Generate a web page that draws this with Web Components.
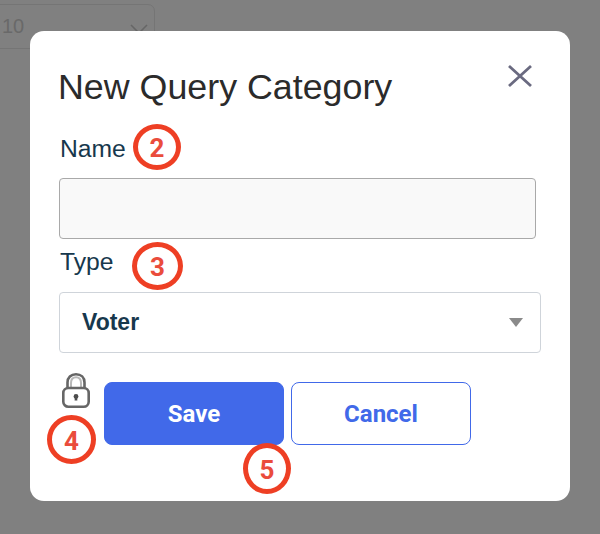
<!DOCTYPE html>
<html>
<head>
<meta charset="utf-8">
<title>New Query Category</title>
<style>
  html, body { margin: 0; height: 534px; overflow: hidden; background: #808080; font-family: "Liberation Sans", Arial, sans-serif; }
</style>
</head>
<body>
<bg-select></bg-select>
<query-modal heading="New Query Category">
  <form-field label="Name" badge="2" bx="74" by="-11" bw="48" bh="46" gap="15"><text-box></text-box></form-field>
  <form-field label="Type" badge="3" bx="73" by="-6" bw="51" bh="48" gap="16"><type-select value="Voter"></type-select></form-field>
  <modal-actions></modal-actions>
</query-modal>

<script>
// page size select that sits behind the dimmed backdrop
class BgSelect extends HTMLElement {
  constructor() {
    super();
    this.attachShadow({ mode: 'open' });
    this.shadowRoot.innerHTML = `
      <style>
        :host { display: block; margin: 4px 0 0 -10px; width: 165px; height: 45px; box-sizing: border-box;
          border: 1px solid #757575; border-radius: 7px; background: #808080; }
        .in { display: flex; align-items: center; justify-content: space-between; height: 100%; padding: 0 6px 0 11px; }
        span { font: 400 20px "Liberation Sans", sans-serif; color: #696969; }
        svg { display: block; margin-top: 5px; }
      </style>
      <div class="in">
        <span>10</span>
        <svg width="18" height="10" viewBox="0 0 18 10"><path d="M1 1l8 8 8-8" fill="none" stroke="#666" stroke-width="1.6"/></svg>
      </div>`;
  }
}

// red numbered ring from the annotated screenshot
class AnnoBadge extends HTMLElement {
  constructor() {
    super();
    this.attachShadow({ mode: 'open' });
  }
  connectedCallback() {
    const w = this.getAttribute('w') || 48;
    const h = this.getAttribute('h') || 48;
    this.shadowRoot.innerHTML = `
      <style>
        :host { display: block; position: absolute; width: ${w}px; height: ${h}px; box-sizing: border-box;
          border: 5px solid #ee3f24; border-radius: 50%; background: #fff; }
        div { display: flex; align-items: center; justify-content: center; height: 100%; box-sizing: border-box; padding-top: 2px;
          font: 700 26px Roboto, "Liberation Sans", sans-serif; color: #ea4c3c; }
      </style>
      <div>${this.getAttribute('n')}</div>`;
  }
}

class QueryModal extends HTMLElement {
  constructor() {
    super();
    this.attachShadow({ mode: 'open' });
  }
  connectedCallback() {
    this.shadowRoot.innerHTML = `
      <style>
        :host { display: block; position: absolute; left: 30px; top: 31px; width: 540px; height: 470px; box-sizing: border-box;
          padding: 36px 29px 0 29px; background: #fff; border-radius: 14px; }
        header { display: flex; justify-content: space-between; align-items: flex-start; height: 40px; margin-bottom: 28px; }
        h1 { margin: 0 0 0 -1px; font: 400 35.8px/40px "Liberation Sans", sans-serif; color: #2b2b2b; }
        svg { display: block; margin: -3px 9px 0 0; }
      </style>
      <header>
        <h1>${this.getAttribute('heading')}</h1>
        <svg width="24" height="24" viewBox="0 0 24 24"><path d="M1 2L23 22M23 2L1 22" fill="none" stroke="#6a6a80" stroke-width="2.8"/></svg>
      </header>
      <slot></slot>`;
  }
}

class FormField extends HTMLElement {
  constructor() {
    super();
    this.attachShadow({ mode: 'open' });
  }
  connectedCallback() {
    const a = (k) => this.getAttribute(k);
    this.shadowRoot.innerHTML = `
      <style>
        :host { display: block; position: relative; }
        .lbl { display: block; height: 28px; margin-left: 1px; font: 400 24.7px/28px "Liberation Sans", sans-serif; color: #17384d; }
        anno-badge { left: ${a('bx')}px; top: ${a('by')}px; }
        .sp { height: ${a('gap')}px; }
      </style>
      <label class="lbl">${a('label')}</label>
      <anno-badge n="${a('badge')}" w="${a('bw')}" h="${a('bh')}"></anno-badge>
      <div class="sp"></div>
      <slot></slot>`;
  }
}

class TextBox extends HTMLElement {
  constructor() {
    super();
    this.attachShadow({ mode: 'open' });
    this.shadowRoot.innerHTML = `
      <style>
        :host { display: block; width: 477px; height: 61px; box-sizing: border-box; margin-bottom: 9px;
          background: #f9f9f9; border: 1px solid #a9a9a9; border-radius: 4px; }
      </style>`;
  }
}

class TypeSelect extends HTMLElement {
  constructor() {
    super();
    this.attachShadow({ mode: 'open' });
  }
  connectedCallback() {
    this.shadowRoot.innerHTML = `
      <style>
        :host { display: flex; align-items: center; justify-content: space-between; width: 482px; height: 61px; box-sizing: border-box;
          padding: 0 17px 0 22px; background: #fff; border: 1px solid #cfd4da; border-radius: 4px; }
        span { font: 700 23px "Liberation Sans", sans-serif; color: #17384d; }
        svg { display: block; margin-top: -1px; }
      </style>
      <span>${this.getAttribute('value')}</span>
      <svg width="14" height="9" viewBox="0 0 14 9"><path d="M0 0h14L7 9z" fill="#8a8a8a"/></svg>`;
  }
}

class ModalActions extends HTMLElement {
  constructor() {
    super();
    this.attachShadow({ mode: 'open' });
    this.shadowRoot.innerHTML = `
      <style>
        :host { display: flex; position: relative; align-items: flex-start; margin-top: 29px; }
        .lock { display: block; margin: -9px 14px 0 3px; }
        button { width: 180px; height: 63px; box-sizing: border-box; border-radius: 8px; border: 1px solid #4169e9;
          font: 700 24px Roboto, "Liberation Sans", sans-serif; padding: 0; margin: 0; }
        .save { background: #4169e9; color: #fff; margin-right: 7px; }
        .cancel { background: #fff; color: #4169e9; }
        .b4 { left: -12px; top: 33px; }
        .b5 { left: 184px; top: 61px; }
      </style>
      <svg class="lock" width="28" height="35" viewBox="0 0 28 35">
        <path d="M5.500 15V9.500C5.500 4.500 9 1.300 14 1.300S22.500 4.500 22.500 9.500V15" fill="none" stroke="#666" stroke-width="2.600"/>
        <path d="M9 15V10C9 6.500 11 4.300 14 4.300S19 6.500 19 10V15" fill="none" stroke="#b8b8b8" stroke-width="2"/>
        <rect x="1.300" y="15" width="25.400" height="18.700" rx="5" fill="#fff" stroke="#666" stroke-width="2.600"/>
        <circle cx="14" cy="23.500" r="2.400" fill="#4d4d4d"/>
        <path d="M13 24h2l.4 3.500h-2.800z" fill="#4d4d4d"/>
      </svg>
      <button class="save">Save</button>
      <button class="cancel">Cancel</button>
      <anno-badge class="b4" n="4" w="49" h="49"></anno-badge>
      <anno-badge class="b5" n="5" w="48" h="51"></anno-badge>`;
  }
}

customElements.define('bg-select', BgSelect);
customElements.define('anno-badge', AnnoBadge);
customElements.define('query-modal', QueryModal);
customElements.define('form-field', FormField);
customElements.define('text-box', TextBox);
customElements.define('type-select', TypeSelect);
customElements.define('modal-actions', ModalActions);
</script>
</body>
</html>
